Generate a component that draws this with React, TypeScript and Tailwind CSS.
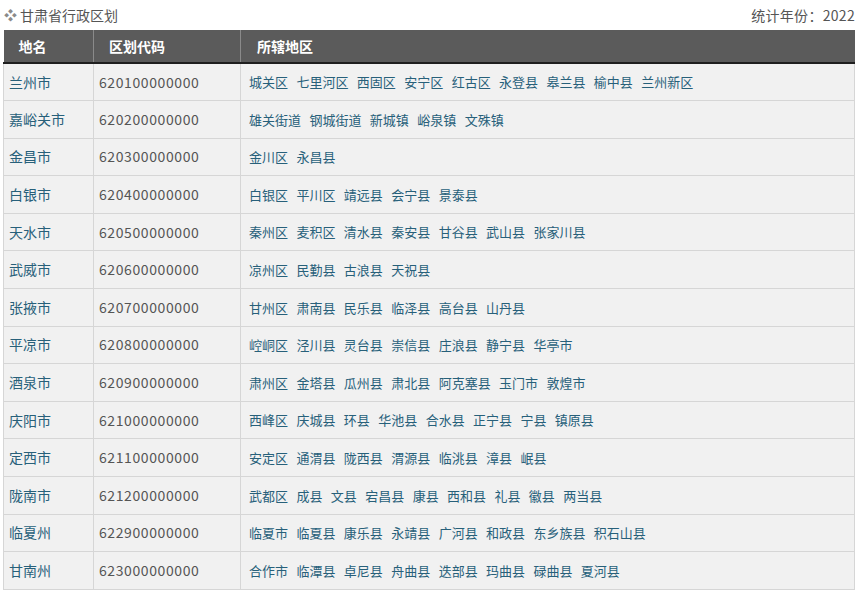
const rows: [string, string, string[]][] = [
  ['兰州市', '620100000000', ['城关区', '七里河区', '西固区', '安宁区', '红古区', '永登县', '皋兰县', '榆中县', '兰州新区']],
  ['嘉峪关市', '620200000000', ['雄关街道', '钢城街道', '新城镇', '峪泉镇', '文殊镇']],
  ['金昌市', '620300000000', ['金川区', '永昌县']],
  ['白银市', '620400000000', ['白银区', '平川区', '靖远县', '会宁县', '景泰县']],
  ['天水市', '620500000000', ['秦州区', '麦积区', '清水县', '秦安县', '甘谷县', '武山县', '张家川县']],
  ['武威市', '620600000000', ['凉州区', '民勤县', '古浪县', '天祝县']],
  ['张掖市', '620700000000', ['甘州区', '肃南县', '民乐县', '临泽县', '高台县', '山丹县']],
  ['平凉市', '620800000000', ['崆峒区', '泾川县', '灵台县', '崇信县', '庄浪县', '静宁县', '华亭市']],
  ['酒泉市', '620900000000', ['肃州区', '金塔县', '瓜州县', '肃北县', '阿克塞县', '玉门市', '敦煌市']],
  ['庆阳市', '621000000000', ['西峰区', '庆城县', '环县', '华池县', '合水县', '正宁县', '宁县', '镇原县']],
  ['定西市', '621100000000', ['安定区', '通渭县', '陇西县', '渭源县', '临洮县', '漳县', '岷县']],
  ['陇南市', '621200000000', ['武都区', '成县', '文县', '宕昌县', '康县', '西和县', '礼县', '徽县', '两当县']],
  ['临夏州', '622900000000', ['临夏市', '临夏县', '康乐县', '永靖县', '广河县', '和政县', '东乡族县', '积石山县']],
  ['甘南州', '623000000000', ['合作市', '临潭县', '卓尼县', '舟曲县', '迭部县', '玛曲县', '碌曲县', '夏河县']],
]

function RegionRow({ name, code, areas }: { name: string; code: string; areas: string[] }) {
  return (
    <tr className="h-[37.6px] border-b border-[#d6d6d6] bg-[#f1f1f1]">
      <td className="border-r border-l border-[#d6d6d6] pl-[5px] text-[14px] text-[#27607a]">{name}</td>
      <td className="border-r border-[#d6d6d6] pl-[5px] text-[14px] tracking-[0.6px] text-[#555]">{code}</td>
      <td className="border-r border-[#d6d6d6] pl-[8px] text-[13px] text-[#27607a]">
        <div className="flex flex-wrap gap-x-[8.4px]">
          {areas.map((a) => (
            <span key={a}>{a}</span>
          ))}
        </div>
      </td>
    </tr>
  )
}

export default function App() {
  return (
    <div
      className="h-[595px] w-[861px] overflow-hidden bg-white pl-[3px] pr-[6px]"
      style={{ fontFamily: '"Noto Sans CJK SC", "Open Sans", sans-serif' }}
    >
      <div className="flex h-[30px] items-center justify-between pl-px text-[14px] text-[#555]">
        <span className="flex items-center">
          <span className="mr-[3px] text-[13px] text-[#8a8a8a]">❖</span>甘肃省行政区划
        </span>
        <span className="tracking-[0.3px]">统计年份：2022</span>
      </div>
      <table className="w-full table-fixed border-collapse">
        <colgroup>
          <col className="w-[90px]" />
          <col className="w-[147px]" />
          <col />
        </colgroup>
        <thead>
          <tr className="h-[33px] border-b-2 border-[#1f1f1f] bg-[#5b5b5b] text-left text-[14px] font-bold text-white">
            <th className="border-r border-[#8a8a8a] pl-[15px] font-bold">地名</th>
            <th className="border-r border-[#8a8a8a] pl-[15px] font-bold">区划代码</th>
            <th className="pl-[16px] font-bold">所辖地区</th>
          </tr>
        </thead>
        <tbody>
          {rows.map(([name, code, areas]) => (
            <RegionRow key={code} name={name} code={code} areas={areas} />
          ))}
        </tbody>
      </table>
    </div>
  )
}
